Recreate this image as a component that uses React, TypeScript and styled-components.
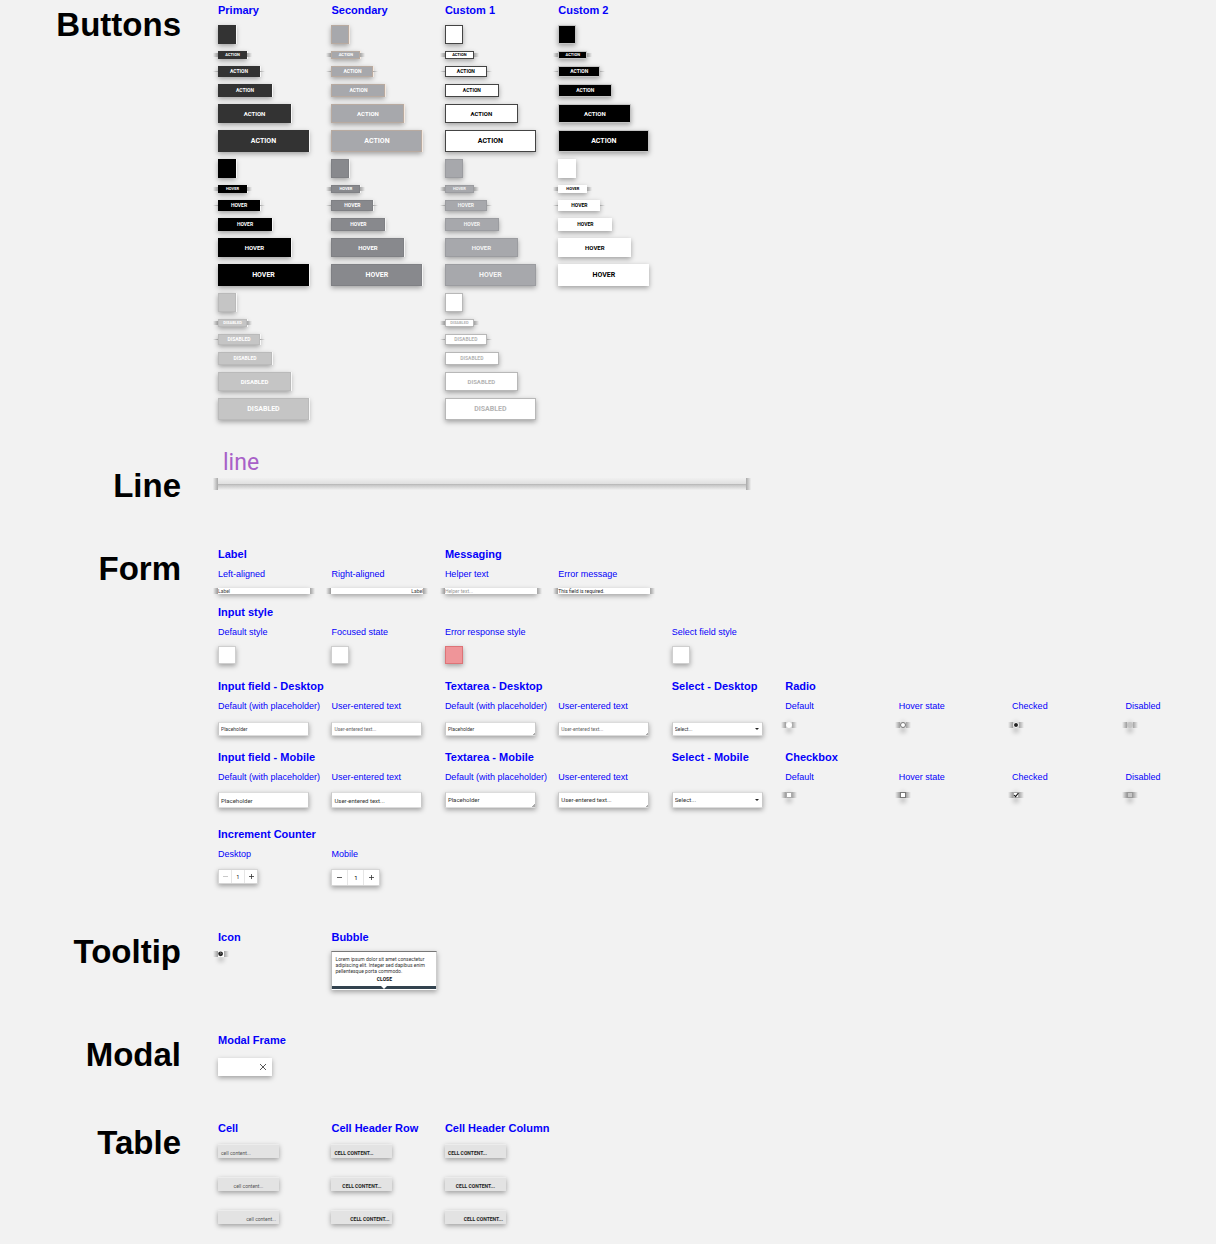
import React, { ReactNode } from "react";
import styled, { createGlobalStyle, css } from "styled-components";

const sans = `"Liberation Sans", Arial, sans-serif`;
const body = `Roboto, "Liberation Sans", sans-serif`;
const narrow = `"Liberation Sans Narrow", "Arial Narrow", Roboto, sans-serif`;

const Global = createGlobalStyle`
  *, *::before, *::after { box-sizing: border-box; }
  body { margin: 0; background: #f2f2f2; font-family: ${sans}; color: #000; }
  button, input, textarea, select { margin: 0; padding: 0; border-radius: 0; font: inherit; color: inherit; }
`;

const lift = "0 2px 5px rgba(0, 0, 0, 0.34)";

const Page = styled.main`
  padding-top: 4px;
  padding-bottom: 20px;
  overflow: hidden;
`;

const SectionBox = styled.section<{ $after: number }>`
  display: grid;
  grid-template-columns: 181px minmax(0, 1fr);
  column-gap: 37px;
  margin-bottom: ${(p) => p.$after}px;
`;

const Title = styled.h1<{ $drop?: number }>`
  margin: ${(p) => p.$drop ?? 2}px 0 0;
  font-size: 33px;
  line-height: 38px;
  height: 38px;
  font-weight: 700;
  text-align: right;
`;

const Columns = styled.div<{ $after?: number }>`
  display: grid;
  grid-template-columns: repeat(9, minmax(0, 1fr));
  column-gap: 23px;
  align-items: start;
  margin-bottom: ${(p) => p.$after ?? 0}px;
`;

const Stack = styled.div<{ $gap: number; $start?: number }>`
  display: flex;
  flex-direction: column;
  align-items: flex-start;
  gap: ${(p) => p.$gap}px;
  min-width: 0;
  ${(p) => p.$start && css`grid-column-start: ${p.$start};`}
`;

const headingText = css`
  font-family: ${sans};
  font-size: 11px;
  line-height: 12px;
  font-weight: 700;
  color: #0400fa;
  white-space: nowrap;
`;

const Heading = styled.h2<{ $start?: number }>`
  ${headingText}
  margin: 0;
  height: 12px;
  ${(p) => p.$start && css`grid-column-start: ${p.$start}; grid-row: 1;`}
`;

const Sub = styled.label`
  height: 10px;
  font-size: 9px;
  line-height: 10px;
  color: #0400fa;
  white-space: nowrap;
`;

/* Short dark fringes at both ends of thin elements */
const fringe = (inset: string, border = 0) => css`
  position: relative;
  &::before,
  &::after {
    content: "";
    position: absolute;
    top: ${inset};
    bottom: ${inset};
    width: 5px;
  }
  &::before {
    right: calc(100% + ${border}px);
    background: linear-gradient(to right, transparent, #9c9c9c);
  }
  &::after {
    left: calc(100% + ${border}px);
    background: linear-gradient(to left, transparent, #a4a4a4);
  }
`;

/* ---------- Buttons ---------- */

type Size = "swatch" | "xs" | "s" | "m" | "l" | "xl";

const sizes: Record<Size, { w: number; h: number; font: number }> = {
  swatch: { w: 18, h: 19, font: 4 },
  xs: { w: 29, h: 8, font: 4 },
  s: { w: 42, h: 11, font: 5 },
  m: { w: 54, h: 13, font: 5 },
  l: { w: 73, h: 19, font: 6 },
  xl: { w: 91, h: 22, font: 7 },
};

interface Tone {
  bg: string;
  fg: string;
  edge: string;
  rim?: string;
}

const ActionButton = styled.button<{ $size: Size; $tone: Tone }>`
  display: flex;
  align-items: center;
  justify-content: center;
  width: ${(p) => sizes[p.$size].w}px;
  height: ${(p) => sizes[p.$size].h}px;
  border: 1px solid ${(p) => p.$tone.edge};
  background: ${(p) => p.$tone.bg};
  color: ${(p) => p.$tone.fg};
  font-family: ${narrow};
  font-size: ${(p) => sizes[p.$size].font}px;
  line-height: 1;
  font-weight: 700;
  box-shadow: 1px 0 0 ${(p) => p.$tone.rim ?? "transparent"}, ${lift};
  ${(p) => p.$size === "xs" && fringe("1px", 1)}
  ${(p) => p.$size === "s" && fringe("4px", 1)}
`;

const order: Size[] = ["swatch", "xs", "s", "m", "l", "xl"];

const palette: { name: string; states: [string, Tone][] }[] = [
  {
    name: "Primary",
    states: [
      ["ACTION", { bg: "#333", fg: "#fff", edge: "#333", rim: "#f8f8f8" }],
      ["HOVER", { bg: "#000", fg: "#fff", edge: "#000", rim: "#f8f8f8" }],
      ["DISABLED", { bg: "#c5c5c5", fg: "#fff", edge: "#bababa", rim: "#f8f8f8" }],
    ],
  },
  {
    name: "Secondary",
    states: [
      ["ACTION", { bg: "#a7a8ac", fg: "#fff", edge: "#b8aaa0", rim: "#f4e9e0" }],
      ["HOVER", { bg: "#88898d", fg: "#fff", edge: "#7f8084", rim: "#f4f4f4" }],
    ],
  },
  {
    name: "Custom 1",
    states: [
      ["ACTION", { bg: "#fff", fg: "#000", edge: "#444" }],
      ["HOVER", { bg: "#a7a8ac", fg: "#f4f4f4", edge: "#9b9ca0" }],
      ["DISABLED", { bg: "#fff", fg: "#b4b4b4", edge: "#b8b8b8" }],
    ],
  },
  {
    name: "Custom 2",
    states: [
      ["ACTION", { bg: "#000", fg: "#fff", edge: "#c4c4c4" }],
      ["HOVER", { bg: "#fff", fg: "#000", edge: "#fff" }],
    ],
  },
];

/* ---------- Line ---------- */

const LineWord = styled.div`
  padding-left: 5px;
  height: 26px;
  font-family: ${body};
  font-size: 23px;
  line-height: 26px;
  font-weight: 400;
  color: #a860c8;
`;

const Rule = styled.div`
  display: grid;
  grid-template-columns: 5px minmax(0, 1fr) 5px;
  height: 12px;
  max-width: 538px;
  margin: 2px 0 0 -5px;
`;

const RuleCap = styled.span<{ $side: "left" | "right" }>`
  background: linear-gradient(to ${(p) => p.$side}, #a8a8a8, #efefef);
`;

const RuleBody = styled.span`
  background: linear-gradient(#f0f0f0, #e0e0e0 48%, #b0b0b0 50%, #c6c6c6 59%, #f0f0f0);
`;

/* ---------- Form ---------- */

const Strip = styled.div<{ $right?: boolean; $tint: string }>`
  width: 92px;
  height: 6px;
  background: #fff;
  font-family: ${body};
  font-size: 5px;
  line-height: 6px;
  text-align: ${(p) => (p.$right ? "right" : "left")};
  color: ${(p) => p.$tint};
  box-shadow: ${lift};
  ${fringe("0")}
`;

const Swatch = styled.input<{ $error?: boolean }>`
  width: 18px;
  height: 18px;
  outline: 0;
  background: ${(p) => (p.$error ? "#ef9599" : "#fff")};
  border: 1px solid ${(p) => (p.$error ? "#dd7377" : "#cfcfcf")};
  box-shadow: ${lift};
`;

const field = css<{ $large?: boolean }>`
  display: block;
  width: 91px;
  height: ${(p) => (p.$large ? 16 : 14)}px;
  padding: 0 2px;
  border: 1px solid #c9c9c9;
  border-top-color: #dcdcdc;
  border-bottom-color: #dcdcdc;
  outline: 0;
  background: #fff;
  box-shadow: ${lift};
  font-family: ${body};
  font-size: ${(p) => (p.$large ? 6 : 5)}px;
  line-height: ${(p) => (p.$large ? 14 : 12)}px;
  color: ${(p) => (p.$large ? "#333" : "#666")};
  &::placeholder {
    color: #333;
    opacity: 1;
  }
`;

const TextField = styled.input<{ $large?: boolean }>`
  ${field}
`;

const AreaBox = styled.span`
  position: relative;
  display: block;
  &::after {
    content: "";
    position: absolute;
    right: 1px;
    bottom: 1px;
    width: 3px;
    height: 3px;
    background: linear-gradient(135deg, transparent 50%, #aaa 50%);
  }
`;

const Area = styled.textarea<{ $large?: boolean }>`
  ${field}
  resize: none;
  overflow: hidden;
`;

const SelectBox = styled.span`
  position: relative;
  display: block;
  &::after {
    content: "";
    position: absolute;
    right: 4px;
    top: calc(50% - 1px);
    border: 2px solid transparent;
    border-top-color: #222;
    border-bottom-width: 0;
  }
`;

const Dropdown = styled.select<{ $large?: boolean }>`
  ${field}
  appearance: none;
  color: #333;
`;

const ToggleBox = styled.span`
  display: block;
  width: 6px;
  height: 6px;
  margin-left: 1px;
  background: #d4d4d4;
  box-shadow: 0 5px 5px -1px rgba(0, 0, 0, 0.4), 0 -2px 4px -1px rgba(0, 0, 0, 0.15);
  ${fringe("0")}
`;

const Toggle = styled.input<{ $hover?: boolean }>`
  appearance: none;
  display: block;
  width: 6px;
  height: 6px;
  border: 1px solid ${(p) => (p.$hover ? "#777" : p.type === "radio" ? "#fff" : "#aaa")};
  border-radius: ${(p) => (p.type === "radio" ? "3px" : "0")};
  background: #fff;
  &:disabled {
    background: #c5c5c5;
    border-color: ${(p) => (p.type === "radio" ? "#c5c5c5" : "#999")};
  }
  &[type="radio"]:checked {
    background: #222;
  }
`;

const Tick = styled.svg`
  position: absolute;
  inset: 0;
  width: 6px;
  height: 6px;
  pointer-events: none;
`;

const Counter = styled.div<{ $large?: boolean }>`
  display: grid;
  grid-template-columns: ${(p) => (p.$large ? "15px 17px 15px" : "12px 14px 12px")};
  height: ${(p) => (p.$large ? 17 : 15)}px;
  border: 1px solid #d6d6d6;
  background: #fff;
  box-shadow: ${lift};
`;

const Step = styled.button`
  display: grid;
  place-items: center;
  border: 0;
  background: none;
  color: #333;
  &:disabled { color: #bbb; }
`;

const Count = styled.input<{ $large?: boolean }>`
  min-width: 0;
  border: solid #e6e6e6;
  border-width: 0 1px;
  background: none;
  text-align: center;
  font-family: ${body};
  font-size: ${(p) => (p.$large ? 6 : 5)}px;
`;

/* ---------- Tooltip ---------- */

const InfoButton = styled.button`
  display: block;
  width: 6px;
  height: 6px;
  border: 0;
  background: #fff;
  box-shadow: 0 5px 5px -1px rgba(0, 0, 0, 0.4);
  ${fringe("0")}
  svg { display: block; }
`;

const Bubble = styled.div`
  width: 106px;
  height: 39px;
  padding: 4px 3px 0;
  border-top: 1px solid #777;
  border-left: 1px solid #bbb;
  border-right: 1px solid #ccc;
  border-bottom: 1px solid #fff;
  background: linear-gradient(#fff 34px, #33434f 34px);
  box-shadow: ${lift};
  font-family: ${body};
  font-size: 5px;
  line-height: 6px;
  color: #333;
  position: relative;
  &::after {
    content: "";
    position: absolute;
    left: 50%;
    bottom: 0;
    margin-left: -3px;
    border: 3px solid transparent;
    border-top-color: #fff;
    border-bottom-width: 0;
  }
  p { margin: 0; white-space: nowrap; }
`;

const CloseText = styled.button`
  display: block;
  height: 6px;
  margin: 2px auto 0;
  border: 0;
  background: none;
  font-family: ${narrow};
  font-size: 5px;
  line-height: 6px;
  font-weight: 700;
  color: #111;
`;

/* ---------- Modal ---------- */

const Frame = styled.div`
  display: flex;
  justify-content: flex-end;
  align-items: center;
  width: 54px;
  height: 18px;
  padding-right: 5px;
  background: #fff;
  box-shadow: ${lift};
`;

/* ---------- Table ---------- */

const Cells = styled.table`
  display: block;
  border-spacing: 0;
  caption { ${headingText} display: block; text-align: left; height: 12px; margin-bottom: 10px; }
  tbody { display: flex; flex-direction: column; gap: 19px; }
  tr { display: block; height: 14px; }
`;

const Cell = styled.td<{ $align: "left" | "center" | "right" }>`
  display: block;
  width: 61px;
  height: 14px;
  padding: 1px 3px 0;
  border-top: 1px solid #ececec;
  background: #e3e3e3;
  box-shadow: ${lift};
  font-family: ${body};
  font-size: 5px;
  line-height: 14px;
  font-weight: 400;
  text-align: ${(p) => p.$align};
  color: #555;
`;

const HeaderCell = styled(Cell)`
  font-family: ${narrow};
  font-weight: 700;
  color: #222;
`;

const aligns = ["left", "center", "right"] as const;

/* ---------- Pieces ---------- */

function Section({ title, after, drop, children }: { title: string; after: number; drop?: number; children: ReactNode }) {
  return (
    <SectionBox $after={after}>
      <Title $drop={drop}>{title}</Title>
      <div>{children}</div>
    </SectionBox>
  );
}

interface Item {
  at: number;
  label?: string;
  render: (id: string) => ReactNode;
}

function FormRow({ name, heads, items, gap, after }: { name: string; heads: [number, string][]; items: Item[]; gap: number; after: number }) {
  return (
    <div>
      <Columns $after={9}>
        {heads.map(([at, text]) => (
          <Heading key={text} $start={at}>{text}</Heading>
        ))}
      </Columns>
      <Columns $after={after}>
        {items.map((item) => {
          const id = `${name}-${item.at}`;
          return (
            <Stack key={id} $gap={gap} $start={item.at}>
              <Sub htmlFor={id}>{item.label}</Sub>
              {item.render(id)}
            </Stack>
          );
        })}
      </Columns>
    </div>
  );
}

function Pick({ kind, id, hover, checked, disabled }: { kind: "radio" | "checkbox"; id: string; hover?: boolean; checked?: boolean; disabled?: boolean }) {
  return (
    <ToggleBox>
      <Toggle type={kind} id={id} $hover={hover} defaultChecked={checked} disabled={disabled} />
      {kind === "checkbox" && checked && (
        <Tick viewBox="0 0 6 6">
          <path d="M1 3l1.5 1.7L5.4 1" fill="none" stroke="#111" strokeWidth="1.1" />
        </Tick>
      )}
    </ToggleBox>
  );
}

const picks = (kind: "radio" | "checkbox"): Item[] => [
  { at: 6, label: "Default", render: (id) => <Pick kind={kind} id={id} /> },
  { at: 7, label: "Hover state", render: (id) => <Pick kind={kind} id={id} hover /> },
  { at: 8, label: "Checked", render: (id) => <Pick kind={kind} id={id} checked /> },
  { at: 9, label: "Disabled", render: (id) => <Pick kind={kind} id={id} disabled /> },
];

const fields = (large: boolean): Item[] => [
  { at: 1, label: "Default (with placeholder)", render: (id) => <TextField id={id} $large={large} placeholder="Placeholder" /> },
  { at: 2, label: "User-entered text", render: (id) => <TextField id={id} $large={large} defaultValue="User-entered text..." /> },
  { at: 3, label: "Default (with placeholder)", render: (id) => <AreaBox><Area id={id} $large={large} rows={1} placeholder="Placeholder" /></AreaBox> },
  { at: 4, label: "User-entered text", render: (id) => <AreaBox><Area id={id} $large={large} rows={1} defaultValue="User-entered text..." /></AreaBox> },
  {
    at: 5,
    render: (id) => (
      <SelectBox>
        <Dropdown id={id} $large={large} aria-label="Select">
          <option>Select...</option>
        </Dropdown>
      </SelectBox>
    ),
  },
];

function Glyph({ plus, size }: { plus?: boolean; size: number }) {
  return (
    <svg width={size} height={size} viewBox="0 0 5 5" fill="none" stroke="currentColor" strokeWidth="0.8">
      <path d={plus ? "M0 2.5h5M2.5 0v5" : "M0 2.5h5"} />
    </svg>
  );
}

function Stepper({ id, large }: { id: string; large?: boolean }) {
  return (
    <Counter $large={large}>
      <Step aria-label="Decrease" disabled={!large}><Glyph size={5} /></Step>
      <Count id={id} $large={large} defaultValue="1" />
      <Step aria-label="Increase"><Glyph plus size={5} /></Step>
    </Counter>
  );
}

export default function App() {
  return (
    <Page>
      <Global />

      <Section title="Buttons" after={30}>
        <Columns>
          {palette.map((group) => (
            <Stack key={group.name} $gap={9}>
              <Heading>{group.name}</Heading>
              <Stack $gap={7}>
                {group.states.map(([text, tone]) =>
                  order.map((size) => (
                    <ActionButton
                      key={text + size}
                      $size={size}
                      $tone={tone}
                      disabled={text === "DISABLED"}
                      aria-label={size === "swatch" ? `${group.name} ${text}` : undefined}
                    >
                      {size === "swatch" ? null : text}
                    </ActionButton>
                  ))
                )}
              </Stack>
            </Stack>
          ))}
        </Columns>
      </Section>

      <Section title="Line" after={43} drop={17}>
        <LineWord>line</LineWord>
        <Rule>
          <RuleCap $side="left" />
          <RuleBody />
          <RuleCap $side="right" />
        </Rule>
      </Section>

      <Section title="Form" after={44}>
        <FormRow
          name="text"
          heads={[[1, "Label"], [3, "Messaging"]]}
          gap={9}
          after={12}
          items={[
            { at: 1, label: "Left-aligned", render: () => <Strip $tint="#444">Label</Strip> },
            { at: 2, label: "Right-aligned", render: () => <Strip $tint="#444" $right>Label</Strip> },
            { at: 3, label: "Helper text", render: () => <Strip $tint="#999">Helper text...</Strip> },
            { at: 4, label: "Error message", render: () => <Strip $tint="#222">This field is required.</Strip> },
          ]}
        />
        <FormRow
          name="style"
          heads={[[1, "Input style"]]}
          gap={9}
          after={16}
          items={[
            { at: 1, label: "Default style", render: (id) => <Swatch id={id} /> },
            { at: 2, label: "Focused state", render: (id) => <Swatch id={id} /> },
            { at: 3, label: "Error response style", render: (id) => <Swatch id={id} $error /> },
            { at: 5, label: "Select field style", render: (id) => <Swatch id={id} /> },
          ]}
        />
        <FormRow
          name="desktop"
          heads={[[1, "Input field - Desktop"], [3, "Textarea - Desktop"], [5, "Select - Desktop"], [6, "Radio"]]}
          gap={11}
          after={15}
          items={[...fields(false), ...picks("radio")]}
        />
        <FormRow
          name="mobile"
          heads={[[1, "Input field - Mobile"], [3, "Textarea - Mobile"], [5, "Select - Mobile"], [6, "Checkbox"]]}
          gap={10}
          after={20}
          items={[...fields(true), ...picks("checkbox")]}
        />
        <FormRow
          name="counter"
          heads={[[1, "Increment Counter"]]}
          gap={10}
          after={1}
          items={[
            { at: 1, label: "Desktop", render: (id) => <Stepper id={id} /> },
            { at: 2, label: "Mobile", render: (id) => <Stepper id={id} large /> },
          ]}
        />
      </Section>

      <Section title="Tooltip" after={44}>
        <Columns>
          <Stack $gap={8}>
            <Heading>Icon</Heading>
            <InfoButton aria-label="More information">
              <svg width="6" height="6" viewBox="0 0 6 6">
                <circle cx="2.6" cy="2.8" r="2.4" fill="#222" />
                <path d="M2.1 2.2q.6-.9 1.1 0 0 .6-.6 1" fill="none" stroke="#ccc" strokeWidth="0.6" />
              </svg>
            </InfoButton>
          </Stack>
          <Stack $gap={8}>
            <Heading>Bubble</Heading>
            <Bubble role="tooltip">
              <p>
                Lorem ipsum dolor sit amet consectetur<br />
                adipiscing elit. Integer sed dapibus enim<br />
                pellentesque porta commodo.
              </p>
              <CloseText>CLOSE</CloseText>
            </Bubble>
          </Stack>
        </Columns>
      </Section>

      <Section title="Modal" after={46}>
        <Stack $gap={12}>
          <Heading>Modal Frame</Heading>
          <Frame>
            <Step aria-label="Close">
              <svg width="8" height="8" viewBox="0 0 8 8">
                <path d="M1 1l6 6M7 1l-6 6" fill="none" stroke="#444" strokeWidth="0.9" />
              </svg>
            </Step>
          </Frame>
        </Stack>
      </Section>

      <Section title="Table" after={0}>
        <Columns>
          <Cells>
            <caption>Cell</caption>
            <tbody>
              {aligns.map((a) => (
                <tr key={a}><Cell $align={a}>cell content...</Cell></tr>
              ))}
            </tbody>
          </Cells>
          <Cells>
            <caption>Cell Header Row</caption>
            <tbody>
              {aligns.map((a) => (
                <tr key={a}><HeaderCell as="th" scope="row" $align={a}>CELL CONTENT...</HeaderCell></tr>
              ))}
            </tbody>
          </Cells>
          <Cells>
            <caption>Cell Header Column</caption>
            <tbody>
              {aligns.map((a) => (
                <tr key={a}><HeaderCell as="th" scope="col" $align={a}>CELL CONTENT...</HeaderCell></tr>
              ))}
            </tbody>
          </Cells>
        </Columns>
      </Section>
    </Page>
  );
}
